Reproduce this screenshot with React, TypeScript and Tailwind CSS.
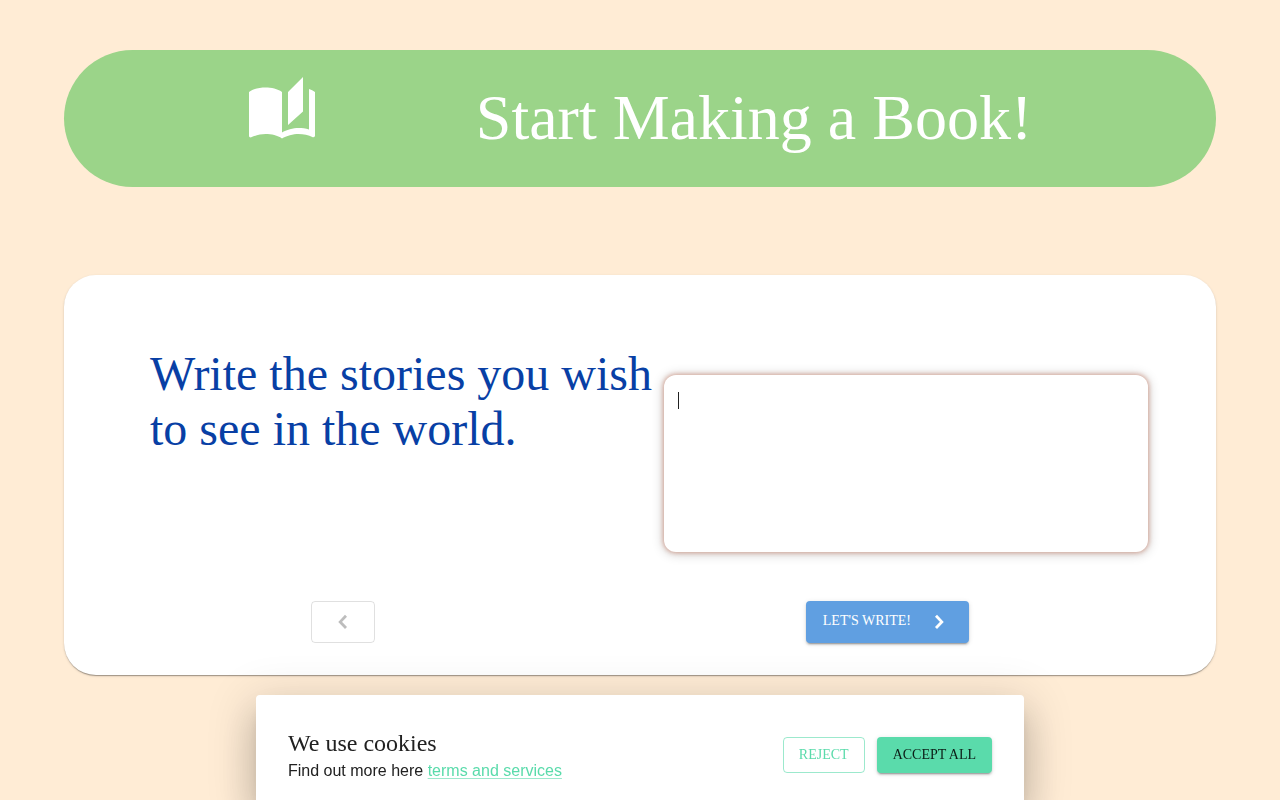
import { useState } from 'react';

function BookIcon() {
  return (
    <svg viewBox="0 0 24 24" fill="currentColor" className="size-18 shrink-0" aria-hidden="true">
      <path d="m19 1-5 5v11l5-4.5V1zM1 6v14.65c0 .25.25.5.5.5.1 0 .15-.05.25-.05C3.1 20.45 5.05 20 6.5 20c1.95 0 4.05.4 5.5 1.5V6c-1.45-1.1-3.55-1.5-5.5-1.5S2.45 4.9 1 6zm22 13.5V6c-.6-.45-1.25-.75-2-1v13.5c-1.1-.35-2.3-.5-3.5-.5-1.7 0-4.15.65-5.5 1.5v2c1.35-.85 3.8-1.5 5.5-1.5 1.65 0 3.35.3 4.75 1.05.1.05.15.05.25.05.25 0 .5-.25.5-.5v-1.1z" />
    </svg>
  );
}

function ChevronLeft() {
  return (
    <svg viewBox="0 0 24 24" fill="none" stroke="currentColor" strokeWidth="2.8" className="size-6" aria-hidden="true">
      <path d="M15 5.8 9.2 11.9 15 18" />
    </svg>
  );
}

function ChevronRight() {
  return (
    <svg viewBox="0 0 24 24" fill="none" stroke="currentColor" strokeWidth="2.8" className="size-6" aria-hidden="true">
      <path d="m9 5.8 5.8 6.1L9 18" />
    </svg>
  );
}

function CookieBanner({ onClose }: { onClose: () => void }) {
  return (
    <section className="fixed inset-x-0 bottom-0 mx-auto flex w-3/5 items-center justify-between rounded-t bg-white px-8 pt-8 pb-[17px] shadow-[0_11px_15px_-7px_rgba(0,0,0,0.2),0_24px_38px_3px_rgba(0,0,0,0.14),0_9px_46px_8px_rgba(0,0,0,0.12)]">
      <div className="text-[#212121]">
        <h2 className="text-2xl leading-8">We use cookies</h2>
        <p className="font-['Liberation_Sans',Arial,sans-serif] text-base leading-6">
          Find out more here{' '}
          <a href="#terms" className="text-[#5adbab] underline decoration-[#5adbab]/60 decoration-1 underline-offset-2">
            terms and services
          </a>
        </p>
      </div>
      <div className="flex gap-3">
        <button
          onClick={onClose}
          className="rounded border border-[#5adbab]/60 px-[15px] py-1 text-sm leading-6 text-[#5adbab] uppercase"
        >
          Reject
        </button>
        <button
          onClick={onClose}
          className="rounded bg-[#5adbab] px-4 py-1.5 text-sm leading-6 text-black/87 uppercase shadow-[0_3px_1px_-2px_rgba(0,0,0,0.2),0_2px_2px_0_rgba(0,0,0,0.14),0_1px_5px_0_rgba(0,0,0,0.12)]"
        >
          Accept all
        </button>
      </div>
    </section>
  );
}

export default function App() {
  const [story, setStory] = useState('');
  const [showCookies, setShowCookies] = useState(true);

  return (
    <div className="min-h-screen bg-[#ffecd5] px-[5%] pt-[50px] pb-[125px] font-['Liberation_Serif','Times_New_Roman',serif]">
      <header className="flex items-start justify-center gap-[158px] rounded-full bg-[#9bd489] pt-6 pr-0.5 pb-[26px] text-white">
        <BookIcon />
        <h1 className="text-[64px] leading-[87px]">Start Making a Book!</h1>
      </header>

      <main className="mt-[88px] rounded-4xl bg-white pt-[71px] pb-8 shadow-[0_2px_1px_-1px_rgba(0,0,0,0.2),0_1px_1px_0_rgba(0,0,0,0.14),0_1px_3px_0_rgba(0,0,0,0.12)]">
        <div className="flex items-start pr-[68px] pl-[86px]">
          <label htmlFor="story" className="flex-1 text-5xl leading-[55px] text-[#083fa5]">
            Write the stories you wish to see in the world.
          </label>
          <div className="relative mt-[29px] w-[48.5%]">
            <textarea
              id="story"
              autoFocus
              value={story}
              onChange={(e) => setStory(e.target.value)}
              className="block h-[177px] w-full resize-none rounded-xl bg-white px-3.5 py-4 text-base leading-5 text-[#212121] shadow-[0_0_4px_1px_rgba(190,90,60,0.45),0_1px_12px_1px_rgba(0,0,0,0.2)] outline-none placeholder-shown:caret-transparent"
              placeholder=" "
            />
            {/* caret shown until the first character is typed */}
            {!story && (
              <span className="pointer-events-none absolute top-[17px] left-3.5 h-[17px] w-px bg-[#212121]" />
            )}
          </div>
        </div>

        <div className="mt-[49px] flex items-center justify-between px-[247px]">
          <button
            disabled
            aria-label="Back"
            className="rounded border border-black/12 px-[19px] py-2 text-[#bdbdbd]"
          >
            <ChevronLeft />
          </button>
          <button className="flex items-start gap-4 rounded bg-[#609fe1] py-[9px] pr-[18px] pl-[17px] text-sm leading-[22px] text-white uppercase shadow-[0_3px_1px_-2px_rgba(0,0,0,0.2),0_2px_2px_0_rgba(0,0,0,0.14),0_1px_5px_0_rgba(0,0,0,0.12)]">
            Let's write!
            <ChevronRight />
          </button>
        </div>
      </main>

      {showCookies && <CookieBanner onClose={() => setShowCookies(false)} />}
    </div>
  );
}
